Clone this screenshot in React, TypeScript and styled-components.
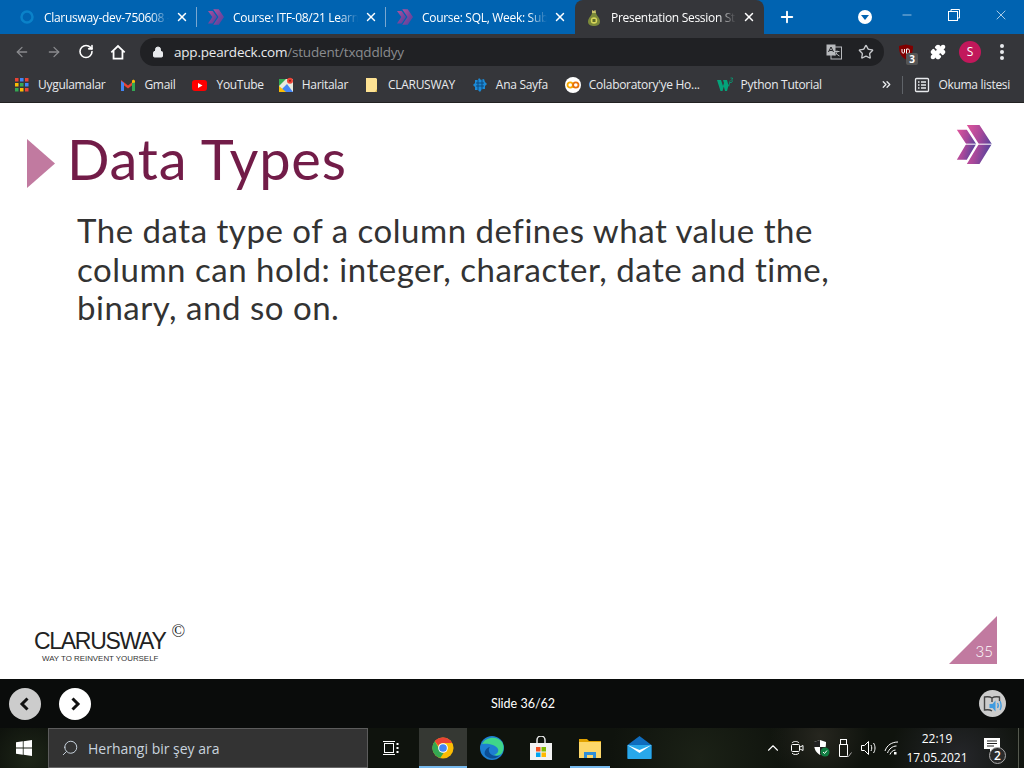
import React from 'react';
import styled, { createGlobalStyle } from 'styled-components';
import { ArrowLeft, ArrowRight, RotateCw, Lock, Star, Puzzle, X, Plus, Minus, ChevronUp, Search, ChevronsRight } from 'lucide-react';

const GlobalStyle = createGlobalStyle`
  html, body { margin: 0; padding: 0; overflow: hidden; background: #fff; }
  * { box-sizing: border-box; }
`;

const Screen = styled.div`
  width: 1024px;
  height: 768px;
  display: flex;
  flex-direction: column;
  font-family: 'Open Sans', 'Liberation Sans', sans-serif;
`;

/* ---------- tab strip ---------- */
const TabStrip = styled.div`
  height: 34px;
  flex: none;
  background: #0063b1;
  display: flex;
  align-items: flex-end;
  padding-left: 8px;
`;

const Tab = styled.div<{ $active?: boolean; $divider?: boolean }>`
  position: relative;
  width: 189px;
  height: 34px;
  display: flex;
  align-items: center;
  padding-left: 11px;
  color: #fff;
  background: ${p => (p.$active ? '#35363a' : 'transparent')};
  border-radius: ${p => (p.$active ? '8px 8px 0 0' : '0')};
  &::after {
    content: '';
    display: ${p => (p.$divider ? 'block' : 'none')};
    position: absolute;
    right: 0;
    top: 7px;
    width: 1px;
    height: 20px;
    background: #7aa7d0;
  }
`;

const TabIcon = styled.span`
  width: 16px;
  height: 16px;
  flex: none;
  display: flex;
  margin-right: 9px;
`;

const TabTitle = styled.span`
  width: 125px;
  font-size: 12px;
  letter-spacing: -0.3px;
  white-space: nowrap;
  overflow: hidden;
  -webkit-mask-image: linear-gradient(90deg, #000 85%, transparent);
  mask-image: linear-gradient(90deg, #000 85%, transparent);
`;

const TabClose = styled.span`
  display: flex;
  margin-left: 6px;
  color: #fff;
`;

const NewTab = styled.span`
  display: flex;
  margin-left: 14px;
  height: 34px;
  align-items: center;
  color: #fff;
`;

const StripRight = styled.div`
  margin-left: auto;
  height: 34px;
  display: flex;
  align-items: center;
`;

const ProfileDrop = styled.span`
  width: 14px;
  height: 14px;
  border-radius: 50%;
  background: #fff;
  display: flex;
  align-items: center;
  justify-content: center;
  margin-right: 11px;
  &::after {
    content: '';
    border-left: 4px solid transparent;
    border-right: 4px solid transparent;
    border-top: 5px solid #0063b1;
    margin-top: 1px;
  }
`;

const WinButton = styled.span`
  width: 47px;
  height: 30px;
  display: flex;
  align-items: center;
  justify-content: center;
  color: #fff;
  margin-bottom: 4px;
`;

/* ---------- toolbar ---------- */
const Toolbar = styled.div`
  height: 35px;
  flex: none;
  background: #35363a;
  display: flex;
  align-items: center;
  padding-left: 14px;
`;

const NavIcon = styled.span<{ $dim?: boolean }>`
  width: 16px;
  height: 16px;
  margin-right: 16px;
  display: flex;
  align-items: center;
  justify-content: center;
  flex: none;
  color: ${p => (p.$dim ? '#8a8b8e' : '#fff')};
`;

const Omnibox = styled.div`
  width: 744px;
  height: 28px;
  margin-left: -2px;
  border-radius: 14px;
  background: #202124;
  display: flex;
  align-items: center;
  padding: 0 10px 0 12px;
  flex: none;
`;

const Url = styled.span`
  margin-left: 10px;
  font-size: 13.5px;
  letter-spacing: -0.2px;
  color: #e8eaed;
`;

const UrlPath = styled.span`
  color: #8a8c8f;
`;

const OmniRight = styled.span`
  margin-left: auto;
  display: flex;
  align-items: center;
  gap: 16px;
  color: #c7c9cc;
`;

const ExtArea = styled.div`
  display: flex;
  align-items: center;
  margin-left: 14px;
  gap: 16px;
`;

const ExtIcon = styled.span`
  position: relative;
  width: 16px;
  height: 16px;
  display: flex;
  align-items: center;
  justify-content: center;
  color: #fff;
`;

const CountBadge = styled.span`
  position: absolute;
  left: 8px;
  top: 9px;
  width: 12px;
  height: 12px;
  border-radius: 2px;
  background: #555;
  color: #fff;
  font-size: 10px;
  font-weight: 700;
  line-height: 12px;
  text-align: center;
`;

const Avatar = styled.span`
  width: 22px;
  height: 22px;
  flex: none;
  margin: 0 -3px;
  border-radius: 50%;
  background: #c2185b;
  color: #fff;
  font-size: 12px;
  line-height: 22px;
  text-align: center;
`;

const MenuDots = styled.span`
  width: 4px;
  height: 16px;
  margin-left: 6px;
  display: flex;
  flex-direction: column;
  justify-content: space-between;
  & > i {
    display: block;
    width: 4px;
    height: 4px;
    border-radius: 50%;
    background: #e8eaed;
  }
`;

/* ---------- bookmarks ---------- */
const BookmarkBar = styled.div`
  height: 34px;
  flex: none;
  background: #35363a;
  border-bottom: 1px solid #222;
  display: flex;
  align-items: center;
  padding: 0 0 2px 14px;
  font-size: 12px;
  letter-spacing: -0.3px;
  color: #e8eaed;
`;

const Bookmark = styled.span<{ $gap?: number }>`
  display: flex;
  align-items: center;
  gap: 8px;
  margin-right: ${p => p.$gap ?? 16}px;
  white-space: nowrap;
`;

const BookmarkIcon = styled.span`
  width: 16px;
  height: 16px;
  display: flex;
  flex: none;
`;

const BarEnd = styled.span`
  margin-left: auto;
  display: flex;
  align-items: center;
  padding-right: 14px;
`;

const BarDivider = styled.span`
  width: 1px;
  height: 18px;
  background: #5f6368;
  margin: 0 11px 0 9px;
`;

/* ---------- slide ---------- */
const Slide = styled.main`
  flex: 1;
  background: #fff;
  display: flex;
  flex-direction: column;
  padding: 21px 27px 15px 27px;
  font-family: Lato, 'Open Sans', sans-serif;
`;

const SlideHead = styled.div`
  display: flex;
  align-items: flex-start;
`;

const TitleMark = styled.span`
  width: 28px;
  height: 49px;
  margin-top: 15px;
  flex: none;
  background: #c17aa0;
  clip-path: polygon(0 0, 100% 50%, 0 100%);
`;

const Title = styled.h1`
  margin: 0 0 0 12px;
  font-size: 56px;
  line-height: 70px;
  font-weight: 400;
  letter-spacing: 0.75px;
  color: #721c48;
`;

const HeadLogo = styled.span`
  margin-left: auto;
  width: 37px;
  height: 41px;
  display: flex;
  margin-right: 4px;
`;

const Body = styled.p`
  margin: 17px 0 0 50px;
  width: 790px;
  font-size: 33px;
  line-height: 38.6px;
  font-weight: 400;
  letter-spacing: 0.52px;
  color: #333;
`;

const SlideFoot = styled.div`
  margin-top: auto;
  display: flex;
  align-items: flex-end;
  justify-content: space-between;
`;

const Brand = styled.div`
  margin-left: 7px;
  font-family: 'Liberation Sans', Arial, sans-serif;
  color: #222;
`;

const BrandName = styled.div`
  font-size: 23px;
  line-height: 22px;
  letter-spacing: -1.3px;
  display: flex;
  align-items: flex-start;
`;

const BrandCopy = styled.span`
  font-family: 'Liberation Serif', serif;
  font-size: 18px;
  line-height: 18px;
  margin-left: 6px;
  margin-top: -8px;
`;

const BrandTag = styled.div`
  font-size: 7.9px;
  line-height: 10px;
  margin: 2px 0 0 8px;
  color: #333;
`;

const PageCorner = styled.div`
  width: 48px;
  height: 48px;
  background: #c17aa0;
  clip-path: polygon(100% 0, 100% 100%, 0 100%);
  display: flex;
  align-items: flex-end;
  justify-content: flex-end;
  color: #fff;
  font-size: 15px;
  font-weight: 300;
  line-height: 25px;
  padding-right: 4px;
`;

/* ---------- pear deck nav ---------- */
const DeckNav = styled.div`
  height: 49px;
  flex: none;
  background: #0a0c0b;
  display: flex;
  align-items: center;
  padding: 0 18px 0 9px;
`;

const RoundNav = styled.span<{ $off?: boolean }>`
  width: 32px;
  height: 32px;
  margin-right: 18px;
  border-radius: 50%;
  background: ${p => (p.$off ? '#ccc' : '#fff')};
  display: flex;
  align-items: center;
  justify-content: center;
`;

const SlideCount = styled.span`
  margin-left: 382px;
  font-family: Lato, sans-serif;
  font-size: 12.5px;
  color: #fff;
`;

const Audio = styled.span`
  margin-left: auto;
  width: 27px;
  height: 27px;
  border-radius: 50%;
  background: #ccc;
  display: flex;
  align-items: center;
  justify-content: center;
`;

/* ---------- taskbar ---------- */
const Taskbar = styled.footer`
  height: 40px;
  flex: none;
  display: flex;
  align-items: center;
  color: #fff;
  background:
    radial-gradient(circle at 820px 8px, #26261f 0, transparent 50px),
    radial-gradient(circle at 960px 30px, #25262a 0, transparent 70px),
    radial-gradient(circle at 700px 30px, #1b2116 0, transparent 90px),
    radial-gradient(circle at 30px 30px, #1e2618 0, transparent 40px),
    #0f130d;
`;

const StartButton = styled.span`
  width: 48px;
  height: 40px;
  flex: none;
  display: flex;
  align-items: center;
  justify-content: center;
`;

const SearchBox = styled.div`
  width: 320px;
  height: 40px;
  flex: none;
  background: #333;
  border: 1px solid #5c5c5c;
  border-bottom-color: #666;
  display: flex;
  align-items: center;
  padding-left: 12px;
  font-size: 14px;
  color: #c9d3de;
`;

const SearchLabel = styled.span`
  margin-left: 9px;
`;

const TaskCell = styled.span<{ $active?: boolean; $open?: boolean; $w: number; $ml?: number; $pr?: number }>`
  width: ${p => p.$w}px;
  height: 40px;
  flex: none;
  margin-left: ${p => p.$ml ?? 0}px;
  padding-right: ${p => p.$pr ?? 0}px;
  display: flex;
  align-items: center;
  justify-content: center;
  background: ${p => (p.$active ? 'rgba(255,255,255,0.16)' : 'transparent')};
  border-bottom: 2px solid ${p => (p.$active || p.$open ? '#76b9ed' : 'transparent')};
  border-top: 2px solid transparent;
`;

const Tray = styled.div`
  margin-left: auto;
  display: flex;
  align-items: center;
  height: 40px;
`;

const TrayIcon = styled.span`
  width: 24px;
  height: 40px;
  display: flex;
  align-items: center;
  justify-content: center;
`;

const Clock = styled.div`
  width: 68px;
  padding-right: 4px;
  text-align: center;
  font-size: 12px;
  line-height: 19px;
  white-space: nowrap;
`;

const Notify = styled.span`
  position: relative;
  width: 38px;
  height: 40px;
  display: flex;
  align-items: center;
  justify-content: center;
  padding-bottom: 6px;
`;

const NotifyCount = styled.span`
  position: absolute;
  left: 16px;
  top: 19px;
  width: 17px;
  height: 17px;
  border-radius: 50%;
  background: #2b2b2b;
  border: 1px solid #aaa;
  font-size: 12px;
  font-weight: 600;
  line-height: 15px;
  text-align: center;
`;

const ShowDesktop = styled.span`
  width: 6px;
  height: 40px;
  margin-left: 7px;
  border-left: 1px solid #55594f;
`;

/* ---------- drawn icons ---------- */
const ChevronMark = ({ id, size = 16, muted }: { id: string; size?: number; muted?: boolean }) => (
  <svg width={size} height={size} viewBox="0 0 110 110" opacity={muted ? 0.78 : 1}>
    <defs>
      <linearGradient id={id} x1="0" y1="0" x2="1" y2="1">
        <stop offset="0" stopColor="#e0509a" />
        <stop offset="0.5" stopColor="#a23f98" />
        <stop offset="1" stopColor="#5b3f9b" />
      </linearGradient>
    </defs>
    <polygon points="0,14 32,14 62,55 32,100 0,100 30,55" fill={`url(#${id})`} />
    <polygon points="36,2 74,2 110,55 74,108 36,108 72,55" fill={`url(#${id})`} />
  </svg>
);

const SlideLogo = () => (
  <svg width="37" height="41" viewBox="80 40 110 123">
    <defs>
      <linearGradient id="slideLogo" x1="0" y1="0" x2="1" y2="0.4">
        <stop offset="0" stopColor="#e0559b" />
        <stop offset="0.55" stopColor="#a8489a" />
        <stop offset="1" stopColor="#5a449c" />
      </linearGradient>
    </defs>
    <polygon points="82,57 112,57 140,100 112,147 82,147 110,100" fill="url(#slideLogo)" />
    <polygon points="112,43 150,43 187,100 150,160 112,160 148,100" fill="url(#slideLogo)" />
    <rect x="105" y="99" width="85" height="3" fill="#fff" />
  </svg>
);

const PearIcon = () => (
  <svg width="16" height="18" viewBox="0 0 16 18">
    <path d="M6 1l1.5 1L9.5 1 10 4H6z" fill="#c9c26a" />
    <path d="M6 4h4c0 2 4 5 4 8.5C14 16 11 17 8 17s-6-1-6-4.500C2 9 6 6 6 4z" fill="#7c8a3a" />
    <circle cx="8" cy="11.500" r="3.200" fill="#d8d65a" />
    <rect x="6.500" y="10" width="3" height="3" fill="#5c6a2a" />
  </svg>
);

const AppsGrid = () => {
  const colors = ['#ea4335', '#4285f4', '#ea4335', '#fbbc04', '#34a853', '#4285f4', '#34a853', '#fbbc04', '#ea4335'];
  return (
    <svg width="16" height="16" viewBox="0 0 16 16">
      {colors.map((c, i) => (
        <rect key={i} x={1 + (i % 3) * 5} y={1 + Math.floor(i / 3) * 5} width="3.500" height="3.500" fill={c} />
      ))}
    </svg>
  );
};

const GmailIcon = () => (
  <svg width="16" height="16" viewBox="0 0 16 16">
    <path d="M1 3l7 5.500L15 3v3l-7 5.500L1 6z" fill="#ea4335" />
    <path d="M1 4v10h3V6z" fill="#4285f4" />
    <path d="M15 4v10h-3V6z" fill="#34a853" />
    <path d="M12 6V3.500L13.500 2.500 15 4v1.500z" fill="#fbbc04" />
  </svg>
);

const YouTubeIcon = () => (
  <svg width="16" height="16" viewBox="0 0 16 16">
    <rect x="0" y="3" width="15" height="11" rx="3" fill="#f00" />
    <polygon points="6,6 10.500,8.500 6,11" fill="#fff" />
  </svg>
);

const MapsIcon = () => (
  <svg width="16" height="16" viewBox="0 0 16 16">
    <rect x="1" y="2" width="14" height="13" fill="#e8eadd" />
    <polygon points="1,15 9,7 15,15" fill="#4285f4" />
    <polygon points="1,2 8,2 1,9" fill="#34a853" />
    <polygon points="8,15 1,9 1,15" fill="#fbbc04" />
    <circle cx="12" cy="3.800" r="3" fill="#ea4335" />
    <circle cx="12" cy="3.800" r="1" fill="#8c1d18" />
  </svg>
);

const NoteIcon = () => (
  <svg width="16" height="16" viewBox="0 0 16 16">
    <path d="M2 1h10l1 1v13H2z" fill="#fde293" />
    <path d="M13 12l-2 3h2z" fill="#d9b84f" />
  </svg>
);

const DevIcon = () => (
  <svg width="16" height="16" viewBox="0 0 16 16">
    <path d="M7 1l2 2 3-1 1 3 2 2-2 2 0 3-3 0-2 3-2-2-3 0 0-3-2-2 2-2 0-3 3 0z" fill="#1c8ad6" />
    <path d="M4 6h8M4 9h8M6 3v10M10 3v10" stroke="#0d4a80" strokeWidth="1" />
  </svg>
);

const ColabIcon = () => (
  <svg width="16" height="16" viewBox="0 0 16 16">
    <circle cx="8" cy="8" r="8" fill="#fff" />
    <circle cx="5.200" cy="8" r="2.700" fill="none" stroke="#f9ab00" strokeWidth="1.800" />
    <circle cx="10.800" cy="8" r="2.700" fill="none" stroke="#e8710a" strokeWidth="1.800" />
  </svg>
);

const W3Icon = () => (
  <svg width="16" height="16" viewBox="0 0 16 16">
    <path d="M0 3h4l2 6 1-3-1-3h4l2 7 1.500-7H13l-3 11H8L6.800 9.500 5.500 14H3.500z" fill="#04a37a" />
    <path d="M13.500 1h2v1l-1 1 1 1-1 1.500h-1.500" fill="none" stroke="#04a37a" strokeWidth="0.800" />
  </svg>
);

const TranslateIcon = () => (
  <svg width="16" height="16" viewBox="0 0 16 16">
    <rect x="5" y="3" width="10.500" height="12" fill="none" stroke="#b8babd" />
    <rect x="0.500" y="0.500" width="9" height="11" fill="#b8babd" />
    <path d="M2.500 8l2.500-5 2.500 5M3.500 6.500h3" fill="none" stroke="#202124" />
    <path d="M9 7.500h4.500M11 6.500c0 3 -1 4 -2 5M10 9c1 1.500 2 2.500 3.500 3" fill="none" stroke="#b8babd" />
  </svg>
);

const UBlockIcon = () => (
  <svg width="16" height="16" viewBox="0 0 16 16">
    <path d="M1 2l7-1.500L15 2c0 6-1 10-7 13.500C2 12 1 8 1 2z" fill="#800000" />
    <path d="M4 5v3c0 1.500 2.500 1.500 2.500 0V5M8.500 5v4.500h1.500c2 0 2-4.500 0-4.500z" fill="none" stroke="#fff" strokeWidth="1" />
  </svg>
);

const HomeIcon = () => (
  <svg width="18" height="18" viewBox="0 0 18 18" fill="none" stroke="#fff" strokeWidth="2">
    <path d="M1.500 9.500L9 2.300l7.500 7.200" />
    <path d="M4 8v8.500h10V8" />
  </svg>
);

const ReaderIcon = () => (
  <svg width="16" height="16" viewBox="0 0 16 16" fill="none" stroke="#e8eaed" strokeWidth="1.300">
    <rect x="1.500" y="1.500" width="13" height="13" rx="1" />
    <path d="M4 5h1.500M4 8h1.500M4 11h1.500M7 5h5M7 8h5M7 11h5" />
  </svg>
);

const WindowsLogo = () => (
  <svg width="16" height="16" viewBox="0 0 16 16" fill="#fff">
    <polygon points="0,2.300 6.800,1.300 6.800,7.600 0,7.600" />
    <polygon points="7.600,1.200 16,0 16,7.600 7.600,7.600" />
    <polygon points="0,8.400 6.800,8.400 6.800,14.700 0,13.700" />
    <polygon points="7.600,8.400 16,8.400 16,16 7.600,14.800" />
  </svg>
);

const TaskView = () => (
  <svg width="16" height="16" viewBox="0 0 16 16" fill="none" stroke="#fff">
    <rect x="1.500" y="3.500" width="9" height="9" />
    <path d="M0 1.500h12M0 14.500h12" />
    <path d="M14.500 3v2M14.500 7v2M14.500 11v2" strokeWidth="2" />
  </svg>
);

const ChromeLogo = () => (
  <svg width="22" height="22" viewBox="0 0 24 24">
    <circle cx="12" cy="12" r="11.500" fill="#fbbc04" />
    <path d="M12 .5A11.500 11.500 0 0 1 22 6.500H12a5.500 5.500 0 0 0-5 3L3 4.500A11.500 11.500 0 0 1 12 .5z" fill="#ea4335" />
    <path d="M3 4.500L7.500 12a5.500 5.500 0 0 0 5.500 5L9 23A11.500 11.500 0 0 1 3 4.500z" fill="#34a853" />
    <circle cx="12" cy="12" r="5.300" fill="#fff" />
    <circle cx="12" cy="12" r="4.200" fill="#4285f4" />
  </svg>
);

const EdgeLogo = () => (
  <svg width="24" height="24" viewBox="0 0 24 24">
    <circle cx="12" cy="12" r="12" fill="#1d7fd1" />
    <path d="M2 8C5 1 17-1 22 6c2 3 2 8 0 11-1 2-5 3-8 2 3-1 5-3 4-6-2-5-12-6-16-5z" fill="#3fd68a" />
    <path d="M10 11c-3 3 0 9 6 9 2 0 3 0 4-1-3 4-11 5-15 0-1-2 0-7 5-8z" fill="#0c4f96" />
  </svg>
);

const StoreLogo = () => (
  <svg width="24" height="24" viewBox="0 0 24 24">
    <path d="M8 7V4a4 4 0 0 1 8 0v3" fill="none" stroke="#e8e8e8" strokeWidth="1.500" />
    <rect x="1" y="7" width="22" height="17" fill="#f2f2f2" />
    <rect x="7" y="11" width="4.500" height="4.500" fill="#f25022" />
    <rect x="12.500" y="11" width="4.500" height="4.500" fill="#7fba00" />
    <rect x="7" y="16.500" width="4.500" height="4.500" fill="#00a4ef" />
    <rect x="12.500" y="16.500" width="4.500" height="4.500" fill="#ffb900" />
  </svg>
);

const FilesLogo = () => (
  <svg width="24" height="24" viewBox="0 0 24 24">
    <path d="M1 3h8l2 2h12v3H1z" fill="#e0a100" />
    <rect x="1" y="6" width="22" height="16" fill="#fcd76a" />
    <path d="M6 22v-6h12v6h-3v-3H9v3z" fill="#2f8ed8" />
  </svg>
);

const MailLogo = () => (
  <svg width="25" height="24" viewBox="0 0 24 24">
    <path d="M0 9l12-9 12 9v13H0z" fill="#0f6cbd" />
    <rect y="9" width="24" height="14" fill="#29a8ea" />
    <path d="M0 9l12 8 12-8v0l-12 5z" fill="#fff" />
  </svg>
);

const MeetNow = () => (
  <svg width="16" height="18" viewBox="0 0 16 18" fill="none" stroke="#fff">
    <path d="M3 4c1-2 6-2 7 0M3 14c1 2 6 2 7 0" />
    <rect x="2.500" y="5.500" width="8" height="7" rx="1" />
    <path d="M11 8l3-1.500v5L11 10" />
  </svg>
);

const DefenderIcon = () => (
  <svg width="18" height="18" viewBox="0 0 18 18">
    <path d="M2 3l6-2 6 2c0 6-1 10-6 13C3 13 2 9 2 3z" fill="#fff" />
    <path d="M8 1v7H2C2 5 2 4 2 3zM8 8h6c-.5 3-2 6-6 8z" fill="#222" />
    <circle cx="13" cy="13" r="4.500" fill="#107c41" />
    <path d="M11 13l1.500 1.500 2.500-3" fill="none" stroke="#fff" />
  </svg>
);

const UsbIcon = () => (
  <svg width="18" height="20" viewBox="0 0 18 20" fill="none" stroke="#fff">
    <rect x="4.500" y="1.500" width="6" height="5" />
    <path d="M3.500 6.500h8v12h-8z" />
    <path d="M11 17l1.500 1.500 3-4" stroke="#aaa" />
  </svg>
);

const VolumeIcon = () => (
  <svg width="18" height="16" viewBox="0 0 18 16" fill="none" stroke="#fff">
    <path d="M1.500 5.500h3l4-4v13l-4-4h-3z" />
    <path d="M11 5c1 2 1 4 0 6M13.500 3c2 3 2 7 0 10" />
  </svg>
);

const WifiIcon = () => (
  <svg width="18" height="16" viewBox="0 0 18 16" fill="none" stroke="#fff">
    <path d="M1 11c2-6 7-9 13-9M3.500 13c1.500-4 5-7 9-7M6 14.500c1-2.500 3-4.500 5.500-4.500" />
    <rect x="10" y="12" width="2.500" height="2.500" fill="#fff" stroke="none" />
  </svg>
);

const NotifyIcon = () => (
  <svg width="16" height="15" viewBox="0 0 16 15">
    <path d="M0 0h16v11H9l-3 3v-3H0z" fill="#fff" />
    <path d="M3 3h10M3 5.500h10M3 8h7" stroke="#222" />
  </svg>
);

const AudioBook = () => (
  <svg width="22" height="20" viewBox="0 0 22 20">
    <path d="M10 4C8 2.500 5 2.500 2.500 3v13c2.500-.5 5.500-.5 7.500 1M10 4c2-1.500 5-1.500 7.500-1v4M10 4v4" fill="none" stroke="#444" strokeWidth="1.400" />
    <path d="M7.500 10h3l3-3.500v11l-3-3.500h-3z" fill="#3f9be0" />
    <path d="M15.500 9c1 1.500 1 3.500 0 5M18 7c1.500 3 1.500 6 0 9" fill="none" stroke="#3f9be0" strokeWidth="1.300" />
  </svg>
);

const tabs = [
  { title: 'Clarusway-dev-750608 - Microsoft', icon: <svg width="16" height="16" viewBox="0 0 16 16"><circle cx="8" cy="8" r="5.500" fill="none" stroke="#0a82c9" strokeWidth="2.500" /></svg> },
  { title: 'Course: ITF-08/21 Learning', icon: <ChevronMark id="t2" muted /> },
  { title: 'Course: SQL, Week: Subject', icon: <ChevronMark id="t3" muted /> },
];

const bookmarks = [
  { label: 'Uygulamalar', icon: <AppsGrid />, gap: 15 },
  { label: 'Gmail', icon: <GmailIcon />, gap: 17 },
  { label: 'YouTube', icon: <YouTubeIcon />, gap: 14 },
  { label: 'Haritalar', icon: <MapsIcon />, gap: 16 },
  { label: 'CLARUSWAY', icon: <NoteIcon />, gap: 17 },
  { label: 'Ana Sayfa', icon: <DevIcon />, gap: 17 },
  { label: "Colaboratory'ye Ho...", icon: <ColabIcon />, gap: 17 },
  { label: 'Python Tutorial', icon: <W3Icon />, gap: 0 },
];

function App() {
  return (
    <Screen>
      <GlobalStyle />
      <TabStrip>
        {tabs.map((t, i) => (
          <Tab key={i} $divider={i < 2}>
            <TabIcon>{t.icon}</TabIcon>
            <TabTitle>{t.title}</TabTitle>
            <TabClose><X size={14} strokeWidth={2.5} /></TabClose>
          </Tab>
        ))}
        <Tab $active>
          <TabIcon><PearIcon /></TabIcon>
          <TabTitle>Presentation Session Student</TabTitle>
          <TabClose><X size={14} strokeWidth={2.5} /></TabClose>
        </Tab>
        <NewTab><Plus size={18} strokeWidth={2.5} /></NewTab>
        <StripRight>
          <ProfileDrop />
          <WinButton><Minus size={14} strokeWidth={1} /></WinButton>
          <WinButton>
            <svg width="12" height="12" viewBox="0 0 12 12" fill="none" stroke="#fff">
              <rect x="0.500" y="2.500" width="9" height="9" />
              <path d="M3 2.500V.5h8.500V9H9.500" />
            </svg>
          </WinButton>
          <WinButton><X size={16} strokeWidth={1} /></WinButton>
        </StripRight>
      </TabStrip>

      <Toolbar>
        <NavIcon $dim><ArrowLeft size={20} strokeWidth={1.9} /></NavIcon>
        <NavIcon $dim><ArrowRight size={20} strokeWidth={1.9} /></NavIcon>
        <NavIcon><RotateCw size={17} strokeWidth={2.4} /></NavIcon>
        <NavIcon><HomeIcon /></NavIcon>
        <Omnibox>
          <Lock size={12} fill="#e8eaed" color="#e8eaed" />
          <Url>app.peardeck.com<UrlPath>/student/txqddldyy</UrlPath></Url>
          <OmniRight>
            <TranslateIcon />
            <Star size={16} strokeWidth={2} />
          </OmniRight>
        </Omnibox>
        <ExtArea>
          <ExtIcon><UBlockIcon /><CountBadge>3</CountBadge></ExtIcon>
          <ExtIcon><Puzzle size={16} fill="#fff" /></ExtIcon>
          <Avatar>S</Avatar>
          <MenuDots><i /><i /><i /></MenuDots>
        </ExtArea>
      </Toolbar>

      <BookmarkBar>
        {bookmarks.map(b => (
          <Bookmark key={b.label} $gap={b.gap}>
            <BookmarkIcon>{b.icon}</BookmarkIcon>
            {b.label}
          </Bookmark>
        ))}
        <BarEnd>
          <ChevronsRight size={13} strokeWidth={2.5} />
          <BarDivider />
          <Bookmark $gap={0}>
            <BookmarkIcon><ReaderIcon /></BookmarkIcon>
            Okuma listesi
          </Bookmark>
        </BarEnd>
      </BookmarkBar>

      <Slide>
        <SlideHead>
          <TitleMark />
          <Title>Data Types</Title>
          <HeadLogo><SlideLogo /></HeadLogo>
        </SlideHead>
        <Body>The data type of a column defines what value the column can hold: integer, character, date and time, binary, and so on.</Body>
        <SlideFoot>
          <Brand>
            <BrandName>CLARUSWAY<BrandCopy>©</BrandCopy></BrandName>
            <BrandTag>WAY TO REINVENT YOURSELF</BrandTag>
          </Brand>
          <PageCorner>35</PageCorner>
        </SlideFoot>
      </Slide>

      <DeckNav>
        <RoundNav $off>
          <svg width="16" height="16" viewBox="0 0 16 16" fill="none" stroke="#111" strokeWidth="3"><path d="M10.500 2.500L5 8l5.500 5.500" /></svg>
        </RoundNav>
        <RoundNav>
          <svg width="16" height="16" viewBox="0 0 16 16" fill="none" stroke="#111" strokeWidth="3"><path d="M5.500 2.500L11 8l-5.500 5.500" /></svg>
        </RoundNav>
        <SlideCount>Slide 36/62</SlideCount>
        <Audio><AudioBook /></Audio>
      </DeckNav>

      <Taskbar>
        <StartButton><WindowsLogo /></StartButton>
        <SearchBox>
          <Search size={18} strokeWidth={1.3} style={{ transform: 'scaleX(-1)' }} />
          <SearchLabel>Herhangi bir şey ara</SearchLabel>
        </SearchBox>
        <TaskCell $w={51} $pr={5}><TaskView /></TaskCell>
        <TaskCell $active $w={48}><ChromeLogo /></TaskCell>
        <TaskCell $w={49}><EdgeLogo /></TaskCell>
        <TaskCell $w={50}><StoreLogo /></TaskCell>
        <TaskCell $open $w={40} $ml={4}><FilesLogo /></TaskCell>
        <TaskCell $w={58}><MailLogo /></TaskCell>
        <Tray>
          <TrayIcon><ChevronUp size={18} strokeWidth={1.5} /></TrayIcon>
          <TrayIcon><MeetNow /></TrayIcon>
          <TrayIcon><DefenderIcon /></TrayIcon>
          <TrayIcon><UsbIcon /></TrayIcon>
          <TrayIcon><VolumeIcon /></TrayIcon>
          <TrayIcon><WifiIcon /></TrayIcon>
          <Clock>22:19<br />17.05.2021</Clock>
          <Notify><NotifyIcon /><NotifyCount>2</NotifyCount></Notify>
          <ShowDesktop />
        </Tray>
      </Taskbar>
    </Screen>
  );
}

export default App;
